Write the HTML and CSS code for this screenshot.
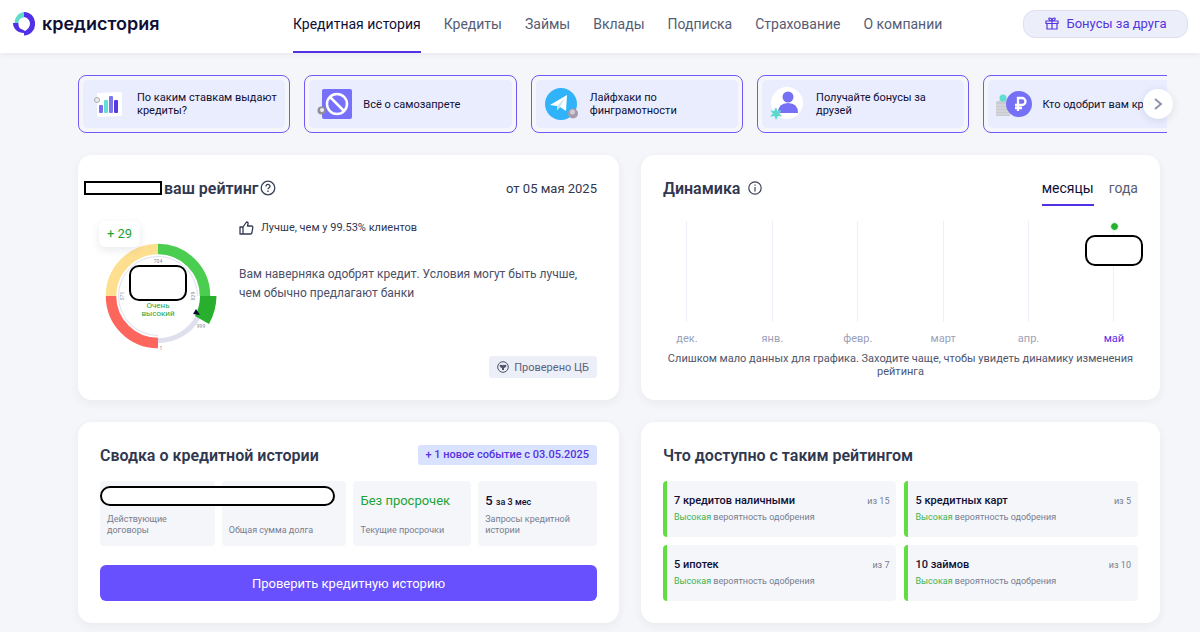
FILE: index.html
```html
<!DOCTYPE html>
<html lang="ru">

<head>
    <meta charset="UTF-8">
    <meta name="viewport" content="width=device-width, initial-scale=1.0">
    <title>Кредистория</title>
    <link rel="stylesheet" href="styles.css">
</head>

<body>
    <!-- Header -->
    <header class="header">
        <a href="#" class="logo">
            <svg width="22" height="24" viewBox="0 0 22 24">
                <path d="M11 0A11 11 0 0 1 22 12 11 11 0 0 1 11 23.500V21C5 21 0 17 0 11H5.500C5 15 7 17 9.500 17.500L12 19C15 17 17 15 17 11.500 17 8 14 5.500 11 5Z" fill="#5230e6"/>
                <path d="M11 0V5.500C7.500 5.500 5.500 8 5.500 11H1.500C2 5 5 1 11 0Z" fill="#5fdccb"/>
            </svg>
            <span>кредистория</span>
        </a>
        <nav class="nav">
            <a href="#" class="active">Кредитная история</a>
            <a href="#">Кредиты</a>
            <a href="#">Займы</a>
            <a href="#">Вклады</a>
            <a href="#">Подписка</a>
            <a href="#">Страхование</a>
            <a href="#">О компании</a>
        </nav>
        <button class="bonus-btn">
            <svg width="14" height="13" viewBox="0 0 14 13" fill="none" stroke="#5533e0" stroke-width="1.2">
                <path d="M1 4h12v2.500H1zM2 6.500h10v5.500H2zM7 4v8M7 4C4 4 3 1 4.500 1S7 2 7 4C7 2 8 1 9.500 1S10 4 7 4"/>
            </svg>
            Бонусы за друга
        </button>
    </header>

    <main class="main">
        <!-- Stories -->
        <section class="stories">
            <div class="stories-track">
                <a href="#" class="story"><span class="story-inner">
                    <svg width="36" height="36" viewBox="0 0 36 36">
                        <path d="M6 7l23-1q2 0 2 2v20q0 2-2 2L8 31q-2 0-2-2z" fill="#fff"/>
                        <rect x="8" y="19" width="4" height="8" rx="1" fill="#7b6cf2"/>
                        <rect x="13" y="14" width="4" height="13" rx="1" fill="#64dfd3"/>
                        <rect x="18" y="10" width="4" height="17" rx="1" fill="#7b78ee"/>
                        <rect x="23" y="14" width="4" height="13" rx="1" fill="#5839dd"/>
                        <circle cx="6" cy="14" r="2.500" fill="#eee" stroke="#aaa"/>
                    </svg>
                    <span>По каким ставкам выдают кредиты?</span>
                </span></a>
                <a href="#" class="story"><span class="story-inner">
                    <svg width="36" height="36" viewBox="0 0 36 36">
                        <rect x="5" y="3" width="30" height="30" rx="2" fill="#7770fb"/>
                        <circle cx="20" cy="18" r="10" fill="none" stroke="#fff" stroke-width="2.500"/>
                        <path d="M13 11l14 14" stroke="#fff" stroke-width="2.500"/>
                        <circle cx="4.500" cy="24.500" r="4" fill="#929097"/>
                        <circle cx="5" cy="24" r="2" fill="#efedf0"/>
                    </svg>
                    <span>Всё о самозапрете</span>
                </span></a>
                <a href="#" class="story"><span class="story-inner">
                    <svg width="36" height="36" viewBox="0 0 36 36">
                        <circle cx="17" cy="18" r="16" fill="#31b3fa"/>
                        <path d="M6 19L23 9 22 25 16 21 13 24 13 20Z" fill="#fff"/>
                        <path d="M13 20l8-8-5 9-3 3z" fill="#c8e5f7"/>
                        <circle cx="29" cy="27.500" r="5" fill="#a49cac"/>
                        <circle cx="28.500" cy="26" r="2.500" fill="#d3cbd4"/>
                    </svg>
                    <span>Лайфхаки по финграмотности</span>
                </span></a>
                <a href="#" class="story"><span class="story-inner">
                    <svg width="36" height="36" viewBox="0 0 36 36">
                        <circle cx="17" cy="17" r="16" fill="#fff"/>
                        <circle cx="18" cy="11" r="5.500" fill="#7670f7"/>
                        <path d="M8 27q0-10 10-10t10 10z" fill="#7670f7"/>
                        <path d="M6 21l1.500 4 4-1-2 3.500 2.500 3-4-.5L6 34l-1.500-4L0 30.500 3 27.500.5 24.500 4 25z" fill="#5bd9ce"/>
                    </svg>
                    <span>Получайте бонусы за друзей</span>
                </span></a>
                <a href="#" class="story"><span class="story-inner">
                    <svg width="36" height="36" viewBox="0 0 36 36">
                        <path d="M0 16q7-4 14 0v14H0z" fill="#c9cbd0"/>
                        <path d="M0 19h14M0 22h14M0 25h14M0 28h14" stroke="#dcdde2"/>
                        <circle cx="7" cy="12" r="3.500" fill="#61ddd0"/>
                        <circle cx="23" cy="18" r="13" fill="#7670f7"/>
                        <path d="M22 25V12h4a3.500 3.500 0 0 1 0 7h-7M19 22h7" fill="none" stroke="#fff" stroke-width="2.300"/>
                    </svg>
                    <span>Кто одобрит вам кредит</span>
                </span></a>
            </div>
            <button class="stories-next" aria-label="Вперёд">
                <svg width="10" height="14" viewBox="0 0 10 14" fill="none" stroke="#888da8" stroke-width="1.800"><path d="M2 2l6 5-6 5"/></svg>
            </button>
        </section>

        <div class="grid">
            <!-- Rating -->
            <section class="card">
                <div class="card-head">
                    <h2 class="rating-title">
                        <span class="name-mask"></span>ваш рейтинг
                        <svg width="16" height="16" viewBox="0 0 16 16" fill="none" stroke="#3a4158" stroke-width="1.300">
                            <circle cx="8" cy="8" r="6.800"/>
                            <path d="M6 6.500C6 3.800 10 3.900 10 6.200 10 7.700 8 7.700 8 9.300M8 10.500v1.500"/>
                        </svg>
                    </h2>
                    <span class="date">от 05 мая 2025</span>
                </div>
                <div class="rating">
                    <div class="gauge">
                        <svg width="120" height="112" viewBox="0 0 120 112">
                            <g fill="none">
                                <path d="M58 103A47 47 0 0 1 11 56" stroke="#fc665d" stroke-width="10.500"/>
                                <path d="M11 56A47 47 0 0 1 58 9" stroke="#fedf90" stroke-width="10.500"/>
                                <path d="M58 9A47 47 0 0 1 105 56" stroke="#4bce50" stroke-width="10.500"/>
                                <path d="M98 77A44.500 44.500 0 0 1 58 100.500" stroke="#dee0ed" stroke-width="5"/>
                                <path d="M58 95.500A39.500 39.500 0 1 1 97.500 56" stroke="#dee0ed"/>
                            </g>
                            <path d="M100 56H116.500A58.500 58.500 0 0 1 109 84L95 76A42 42 0 0 0 100 56Z" fill="#29af2e"/>
                            <path d="M96 69l4 6-7-1z" fill="#0b0b35"/>
                            <g class="gauge-scale">
                                <text x="58" y="23">704</text>
                                <text transform="translate(24 56) rotate(-90)">571</text>
                                <text transform="translate(95 56) rotate(-90)">829</text>
                                <text x="101" y="88">999</text>
                                <text x="61" y="110">1</text>
                            </g>
                        </svg>
                        <span class="gauge-diff">+ 29</span>
                        <span class="gauge-mask"></span>
                        <span class="gauge-level">Очень<br>высокий</span>
                    </div>
                    <div class="rating-text">
                        <p class="better">
                            <svg width="15" height="14" viewBox="0 0 15 14" fill="none" stroke="#343a54" stroke-width="1.300" stroke-linejoin="round">
                                <path d="M1 6h3v7H1zM4 6L7.500 1Q9.500 1 9 3L8.500 5H12.500Q14 5 13.800 6.500L13 11.500Q12.700 13 11.500 13H4"/>
                            </svg>
                            Лучше, чем у 99.53% клиентов
                        </p>
                        <p class="advice">Вам наверняка одобрят кредит. Условия могут быть лучше, чем обычно предлагают банки</p>
                    </div>
                </div>
                <span class="verified">
                    <svg width="12" height="12" viewBox="0 0 12 12" fill="none" stroke="#4c5269">
                        <circle cx="6" cy="6" r="5.300"/>
                        <path d="M2.500 4.500q1.500-1.500 3 0L6 3l.5 1.500q1.500-1.500 3 0-.5 2-2.500 2.500v2H5V7Q3 6.500 2.500 4.500z" fill="#4c5269" stroke="none"/>
                    </svg>
                    Проверено ЦБ
                </span>
            </section>

            <!-- Dynamics -->
            <section class="card">
                <div class="card-head">
                    <h2>Динамика
                        <svg width="14" height="14" viewBox="0 0 14 14" fill="none" stroke="#3a4158" stroke-width="1.200">
                            <circle cx="7" cy="7" r="6.200"/><path d="M7 6v4.500M7 3.500v1.300"/>
                        </svg>
                    </h2>
                    <div class="tabs">
                        <button class="tab active">месяцы</button>
                        <button class="tab">года</button>
                    </div>
                </div>
                <div class="chart">
                    <div class="month">дек.</div>
                    <div class="month">янв.</div>
                    <div class="month">февр.</div>
                    <div class="month">март</div>
                    <div class="month">апр.</div>
                    <div class="month current">май<span class="dot"></span><span class="value-mask"></span></div>
                </div>
                <p class="chart-note">Слишком мало данных для графика. Заходите чаще, чтобы увидеть динамику изменения рейтинга</p>
            </section>

            <!-- Summary -->
            <section class="card">
                <div class="card-head">
                    <h2>Сводка о кредитной истории</h2>
                    <span class="event">+ 1 новое событие с 03.05.2025</span>
                </div>
                <div class="stats">
                    <div class="stat"><span>Действующие договоры</span></div>
                    <div class="stat"><span>Общая сумма долга</span></div>
                    <div class="stat"><strong class="good">Без просрочек</strong><span>Текущие просрочки</span></div>
                    <div class="stat"><strong>5 <small>за 3 мес</small></strong><span>Запросы кредитной истории</span></div>
                    <span class="stats-mask"></span>
                </div>
                <button class="check-btn">Проверить кредитную историю</button>
            </section>

            <!-- Offers -->
            <section class="card">
                <div class="card-head">
                    <h2>Что доступно с таким рейтингом</h2>
                </div>
                <div class="offers">
                    <a href="#" class="offer">
                        <span class="offer-top"><b>7 кредитов наличными</b><span>из 15</span></span>
                        <span class="chance"><em>Высокая</em> вероятность одобрения</span>
                    </a>
                    <a href="#" class="offer">
                        <span class="offer-top"><b>5 кредитных карт</b><span>из 5</span></span>
                        <span class="chance"><em>Высокая</em> вероятность одобрения</span>
                    </a>
                    <a href="#" class="offer">
                        <span class="offer-top"><b>5 ипотек</b><span>из 7</span></span>
                        <span class="chance"><em>Высокая</em> вероятность одобрения</span>
                    </a>
                    <a href="#" class="offer">
                        <span class="offer-top"><b>10 займов</b><span>из 10</span></span>
                        <span class="chance"><em>Высокая</em> вероятность одобрения</span>
                    </a>
                </div>
            </section>
        </div>
    </main>
</body>

</html>
```
FILE: styles.css
```css
:root {
    --bg: #f5f6f9;
    --text: #0f0f36;
    --heading: #30374f;
    --muted: #777d92;
    --accent: #5230e6;
    --green: #21a336;
}

* {
    box-sizing: border-box;
}

body {
    margin: 0;
    background: var(--bg);
    color: var(--text);
    font-family: Roboto, "Liberation Sans", sans-serif;
    font-size: 13px;
}

a {
    color: inherit;
    text-decoration: none;
}

button {
    font-family: inherit;
    border: 0;
    padding: 0;
    background: none;
    cursor: pointer;
}

h2,
p {
    margin: 0;
}

/* Header */
.header {
    display: flex;
    align-items: center;
    height: 53px;
    padding: 0 12px 6px 13px;
    background: #fff;
    box-shadow: 0 1px 6px rgba(40, 50, 80, 0.08);
}

.logo {
    display: flex;
    align-items: center;
    gap: 7px;
    flex: 0 0 280px;
    font-family: Inter, sans-serif;
    font-size: 18px;
    font-weight: 600;
}

.nav {
    display: flex;
    gap: 23px;
    flex: 1;
    font-size: 14px;
    color: #565c73;
    white-space: nowrap;
}

.nav a {
    position: relative;
    line-height: 20px;
}

.nav .active {
    color: var(--text);
}

.nav .active::after {
    content: "";
    position: absolute;
    left: 0;
    right: 0;
    bottom: -19px;
    height: 2px;
    background: var(--accent);
}

.bonus-btn {
    display: flex;
    align-items: center;
    justify-content: center;
    gap: 8px;
    width: 165px;
    height: 28px;
    border: 1px solid #dcdff0;
    border-radius: 12px;
    background: #eceef9;
    color: #5533e0;
    font-size: 13px;
}

.main {
    padding: 22px 40px 9px 78px;
}

/* Stories */
.stories {
    position: relative;
    margin: 0 -7px 22px 0;
}

.stories-track {
    display: flex;
    gap: 14px;
    overflow: hidden;
}

.story {
    flex: 0 0 auto;
    width: 19.5%;
    padding: 4px;
    border: 1px solid #7259f5;
    border-radius: 8px;
}

.story-inner {
    display: flex;
    align-items: center;
    gap: 10px;
    height: 48px;
    padding: 0 6px 0 8px;
    border-radius: 5px;
    background: #e9edfe;
    font-size: 11px;
    line-height: 13px;
}

.story-inner svg {
    flex: none;
}

.stories-next {
    position: absolute;
    right: -6px;
    top: 14px;
    display: flex;
    align-items: center;
    justify-content: center;
    width: 30px;
    height: 30px;
    border-radius: 50%;
    background: #fff;
    box-shadow: 0 2px 8px rgba(40, 50, 100, 0.12);
}

/* Cards */
.grid {
    display: grid;
    grid-template-columns: 542fr 520fr;
    gap: 22px;
}

.card {
    display: flex;
    flex-direction: column;
    padding: 22px;
    border-radius: 14px;
    background: #fff;
    box-shadow: 0 3px 10px rgba(40, 50, 90, 0.06);
}

.card-head {
    display: flex;
    align-items: center;
    justify-content: space-between;
    height: 22px;
    color: var(--heading);
}

.card h2 {
    display: flex;
    align-items: center;
    gap: 8px;
    font-size: 16px;
    font-weight: 600;
    white-space: nowrap;
}

/* Rating */
.card .rating-title {
    gap: 2px;
}

.name-mask {
    width: 78px;
    height: 14px;
    margin-left: -16px;
    border: 2px solid #000;
    background: #fff;
}

.rating {
    display: flex;
    gap: 19px;
    margin: 22px 0 4px;
}

.gauge {
    position: relative;
    flex: none;
    padding-top: 19px;
}

.gauge svg {
    display: block;
}

.gauge-scale {
    font-size: 5px;
    fill: #858aa0;
    text-anchor: middle;
}

.gauge-diff {
    position: absolute;
    top: 0;
    left: -1px;
    width: 41px;
    border-radius: 6px;
    background: #fff;
    box-shadow: 0 3px 8px rgba(40, 50, 90, 0.1);
    color: var(--green);
    font-size: 13px;
    line-height: 26px;
    text-align: center;
}

.gauge-mask {
    position: absolute;
    top: 44px;
    left: 29px;
    width: 58px;
    height: 36px;
    border: 2px solid #000;
    border-radius: 10px;
    background: #fff;
}

.gauge-level {
    position: absolute;
    top: 81px;
    left: 29px;
    width: 58px;
    color: var(--green);
    font-size: 8px;
    line-height: 8px;
    text-align: center;
}

.better {
    display: flex;
    align-items: center;
    gap: 7px;
    margin-bottom: 30px;
    color: var(--heading);
    font-size: 11px;
    line-height: 14px;
}

.advice {
    color: #4a5068;
    font-size: 12px;
    line-height: 19px;
}

.verified {
    display: flex;
    align-items: center;
    gap: 5px;
    align-self: flex-end;
    height: 22px;
    padding: 0 8px;
    border-radius: 3px;
    background: #eceef8;
    color: #5c6279;
    font-size: 11px;
}

/* Dynamics */
.tabs {
    display: flex;
    gap: 15px;
}

.tab {
    position: relative;
    color: #565c73;
    font-size: 14px;
}

.tab.active {
    color: var(--text);
}

.tab.active::after {
    content: "";
    position: absolute;
    left: 0;
    right: 0;
    bottom: -10px;
    height: 2px;
    background: var(--accent);
}

.chart {
    display: flex;
    justify-content: space-between;
    margin: 22px 0 6px;
}

.month {
    position: relative;
    width: 48px;
    color: #9a9fb9;
    font-size: 11px;
    line-height: 14px;
    text-align: center;
}

.month::before {
    content: "";
    display: block;
    width: 1px;
    height: 101px;
    margin: 0 auto 10px;
    background: #eceef8;
}

.month.current {
    color: var(--accent);
}

.dot {
    position: absolute;
    top: 1px;
    left: 20px;
    width: 9px;
    height: 9px;
    border: 1px solid #fff;
    border-radius: 50%;
    background: #27b02d;
}

.value-mask {
    position: absolute;
    top: 14px;
    left: -5px;
    width: 58px;
    height: 31px;
    border: 2px solid #000;
    border-radius: 10px;
    background: #fff;
}

.chart-note {
    color: #4f556c;
    font-size: 11px;
    line-height: 13px;
    text-align: center;
}

/* Summary */
.event {
    padding: 0 8px;
    border-radius: 3px;
    background: #d9e2ff;
    color: #5533e0;
    font-size: 11px;
    font-weight: 500;
    line-height: 20px;
}

.stats {
    position: relative;
    display: grid;
    grid-template-columns: 115fr 125fr 118fr 119fr;
    gap: 7px;
    margin: 15px 0 19px;
}

.stat {
    display: flex;
    flex-direction: column;
    justify-content: space-between;
    min-height: 65px;
    padding: 12px 7px 10px;
    border-radius: 4px;
    background: var(--bg);
    color: var(--muted);
    font-size: 9px;
    line-height: 11px;
}

.stat span:only-child {
    margin-top: auto;
}

.stat strong {
    color: var(--text);
    font-size: 13px;
    font-weight: 500;
    line-height: 16px;
    white-space: nowrap;
}

.stat small {
    font-size: 9px;
}

.stat .good {
    color: var(--green);
    font-weight: 400;
}

.stats-mask {
    position: absolute;
    top: 5px;
    left: 0;
    width: 235px;
    height: 20px;
    border: 2px solid #000;
    border-radius: 10px;
    background: #fff;
}

.check-btn {
    height: 36px;
    border-radius: 6px;
    background: #6950ff;
    color: #fff;
    font-size: 13px;
}

/* Offers */
.offers {
    display: grid;
    grid-template-columns: 1fr 1fr;
    gap: 8px;
    margin-top: 15px;
}

.offer {
    height: 56px;
    padding: 12px 7px 0;
    border-left: 4px solid #62dc43;
    border-radius: 4px;
    background: var(--bg);
    color: var(--muted);
    font-size: 9px;
}

.offer-top {
    display: flex;
    justify-content: space-between;
    line-height: 16px;
}

.offer b {
    color: var(--text);
    font-size: 11px;
    font-weight: 500;
}

.chance {
    display: block;
    line-height: 16px;
}

.chance em {
    color: #3cb34e;
    font-style: normal;
}
```
